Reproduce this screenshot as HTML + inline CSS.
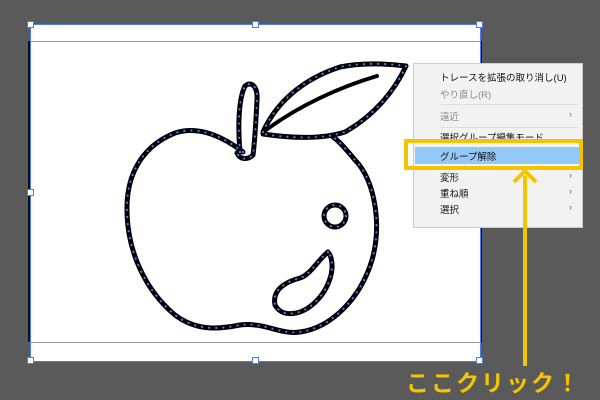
<!DOCTYPE html>
<html><head><meta charset="utf-8"><style>
body{margin:0;width:600px;height:400px;background:#5a5a5a;position:relative;overflow:hidden;font-family:"Liberation Sans","Noto Sans CJK JP",sans-serif}
.a{position:absolute}
.menu{left:413px;top:63px;width:170px;height:165px;background:#f2f2f2;border:1px solid #ccc;box-sizing:border-box}
.it{position:absolute;left:26px;font-size:9.5px;color:#111;white-space:nowrap}
.g{color:#888}
.ar{position:absolute;right:10px;font-size:9px;color:#666}
.sep{position:absolute;left:26px;right:4px;height:1px;background:#ddd}
.h{width:5px;height:5px;background:#fff;border:1px solid #4a7cf5;position:absolute}
</style></head><body>
<div class="a" style="left:30px;top:24px;width:450px;height:337px;background:#fff"></div>
<div class="a" style="left:29px;top:41px;width:452px;height:1px;background:#999"></div>
<div class="a" style="left:29px;top:342px;width:452px;height:1px;background:#999"></div>
<div class="a" style="left:28px;top:41px;width:2px;height:301px;background:#111"></div>
<div class="a" style="left:480px;top:41px;width:2px;height:301px;background:#111"></div>
<div class="a" style="left:30px;top:24px;width:449px;height:336px;border:1px solid #4a7cf5"></div>
<div class="h" style="left:27px;top:21px"></div><div class="h" style="left:252px;top:21px"></div><div class="h" style="left:476px;top:21px"></div>
<div class="h" style="left:27px;top:189px"></div><div class="h" style="left:476px;top:189px"></div>
<div class="h" style="left:27px;top:357px"></div><div class="h" style="left:252px;top:357px"></div><div class="h" style="left:476px;top:357px"></div>
<svg class="a" style="left:0;top:0" width="600" height="400" fill="none" stroke-linecap="round" stroke-linejoin="round">
<g stroke="#000" stroke-width="5">
<path id="b" d="M243 152 C225 138 200 125 175 133 C145 145 128 170 127 205 C126 250 145 290 175 315 C195 330 215 330 240 325 C265 322 280 335 300 332 C330 328 360 300 372 260 C382 225 375 180 355 160 C345 148 338 140 333 137"/>
<path id="s" d="M240 152 C238 130 238 100 245 86 C252 80 258 88 257 100 C256 120 255 140 253 155 C248 160 240 160 237 153"/>
<path id="l" d="M263 132 C275 105 300 80 340 67 C365 62 390 64 406 66 C395 90 375 115 345 132 C320 140 290 138 263 134"/>
<path d="M266 130 C300 105 340 87 377 76" stroke-width="4"/>
<circle id="c" cx="335" cy="216" r="11"/>
<path id="t" d="M328 252 C318 260 310 275 300 278 C285 282 272 290 275 305 C282 318 300 315 312 305 C328 292 336 270 330 255 Z"/>
</g>
<g stroke="#4a7cf5" stroke-width="2.2" stroke-dasharray="0.1 7">
<use href="#b"/><use href="#s"/><use href="#l"/><use href="#c"/><use href="#t"/>
</g>
</svg>
<div class="a menu">
<div class="it" style="top:6px">トレースを拡張の取り消し(U)</div>
<div class="it g" style="top:23px">やり直し(R)</div>
<div class="sep" style="top:40px"></div>
<div class="it g" style="top:45px">遠近</div><div class="ar" style="top:45px">›</div>
<div class="sep" style="top:63px"></div>
<div class="it" style="top:66px">選択グループ編集モード</div>
<div class="a" style="left:1px;top:83px;width:166px;height:17px;background:#92c9f7"></div>
<div class="it" style="top:85px">グループ解除</div>
<div class="it" style="top:106px">変形</div><div class="ar" style="top:106px">›</div>
<div class="it" style="top:122px">重ね順</div><div class="ar" style="top:122px">›</div>
<div class="it" style="top:138px">選択</div><div class="ar" style="top:138px">›</div>
</div>
<div class="a" style="left:404px;top:139px;width:171px;height:23px;border:4px solid #f5c400"></div>
<div class="a" style="left:523px;top:176px;width:4px;height:190px;background:#f5c400"></div>
<svg class="a" style="left:510px;top:166px" width="30" height="20"><path d="M4 16 L15 5 L26 16" stroke="#f5c400" stroke-width="4" fill="none"/></svg>
<div class="a" style="left:406px;top:364px;font-size:23px;font-weight:bold;color:#f5c400;letter-spacing:2px;white-space:nowrap">ここクリック！</div>
</body></html>
